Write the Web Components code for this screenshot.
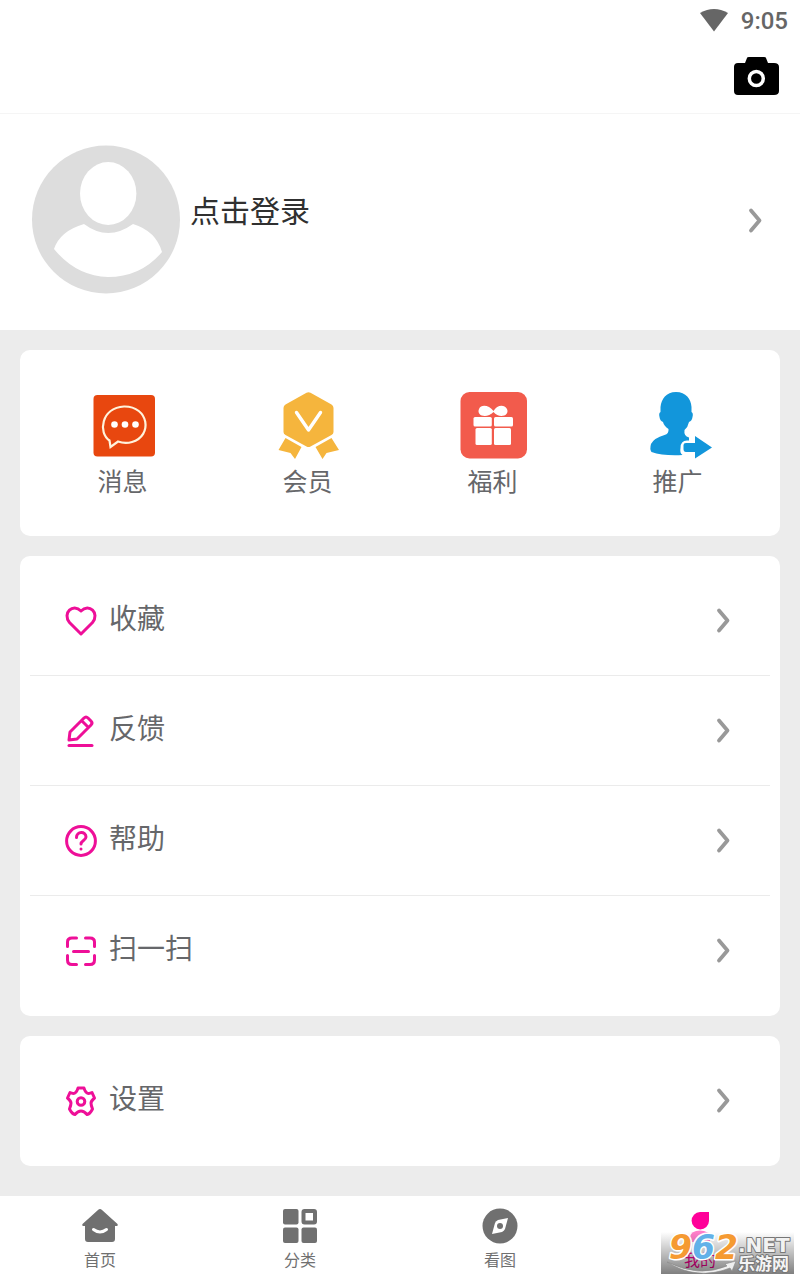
<!DOCTYPE html>
<html lang="zh-CN">
<head>
  <meta charset="UTF-8">
  <meta name="viewport" content="width=device-width, initial-scale=1">
  <title>我的</title>
  <style>
    html, body {
      margin: 0;
      min-height: 100%;
    }

    body {
      font-family: Roboto, "Noto Sans CJK SC", sans-serif;
      font-weight: 400;
      color: #66676a;
      background: #ececec;
    }
  </style>
</head>
<body>
  <mine-page>
    <status-bar slot="top" time="9:05"></status-bar>
    <title-bar slot="top"></title-bar>
    <profile-row slot="top">点击登录</profile-row>

    <card-box>
      <shortcut-grid>
        <shortcut-item icon="message">消息</shortcut-item>
        <shortcut-item icon="vip">会员</shortcut-item>
        <shortcut-item icon="gift">福利</shortcut-item>
        <shortcut-item icon="promote">推广</shortcut-item>
      </shortcut-grid>
    </card-box>

    <card-box>
      <menu-row icon="heart">收藏</menu-row>
      <menu-row icon="pencil">反馈</menu-row>
      <menu-row icon="help">帮助</menu-row>
      <menu-row icon="scan" last>扫一扫</menu-row>
    </card-box>

    <card-box>
      <menu-row icon="gear" last>设置</menu-row>
    </card-box>

    <tab-bar slot="bottom">
      <tab-item icon="home">首页</tab-item>
      <tab-item icon="category">分类</tab-item>
      <tab-item icon="compass">看图</tab-item>
      <tab-item icon="mine" active>我的</tab-item>
      <site-badge slot="badge"></site-badge>
    </tab-bar>
  </mine-page>

  <script>
    // each icon: [width, height, svg content]
    const ICONS = {
      wifi: [30, 24, '<path fill="#666" d="M1 4Q15-4 29 4L15 22.500Z"/>'],
      camera: [46, 40, '<path d="M5 7H12L14 2Q14 1 16 1H31Q33 1 33 2L35 7H41Q46 7 46 11V35Q46 39 41 39H5Q1 39 1 35V11Q1 7 5 7Z"/><circle cx="23.300" cy="22.500" r="7" fill="none" stroke="#fff" stroke-width="3.500"/>'],
      avatar: [148, 148, '<circle cx="74" cy="74.500" r="74" fill="#ddd"/><ellipse cx="76.200" cy="48.500" rx="28.200" ry="31.500" fill="#fff"/><path fill="#fff" d="M52 79Q76 97 101 79Q124 86 130 107Q109 132 76 132Q44 131 22 104Q28 86 52 79Z"/>'],
      chevron: [16, 28, '<path d="M4 3.500L12.500 13.500L4 23.500" fill="none" stroke="#999" stroke-width="3.800" stroke-linecap="round" stroke-linejoin="round"/>'],
      message: [68, 68, '<rect x="4.500" y="3" width="61.500" height="61.500" rx="4" fill="#e8470f"/><path d="M20.500 48.500C9 41 12 16 35 14.500C60 14 64 44 43 50Q36 52 29 49.500L21.500 55Z" fill="none" stroke="#fff3dc" stroke-width="2.200"/><g fill="#fff"><circle cx="25.500" cy="32.500" r="3.300"/><circle cx="36" cy="32.500" r="3.300"/><circle cx="46.500" cy="32.500" r="3.300"/></g>'],
      vip: [68, 68, '<g fill="#f5b53d"><path d="M32.500 .8Q34.500 -.4 36.500 .8L57.500 12.500Q59.500 13.500 59.500 16V40Q59.500 42 57.500 43L36.500 54.500Q34.500 55.500 32.500 54.500L11.500 43Q9.500 42 9.500 40V16Q9.500 13.500 11.500 12.500Z"/><path d="M11.500 46L27.500 55L21 67L16.500 61L4.500 58Z"/><path d="M57.500 46L41.500 55L48.500 67L52.500 61L65 58Z"/></g><path d="M22.500 20.500L34.500 38L46.500 20.500" fill="none" stroke="#fff" stroke-width="3.400" stroke-linecap="round" stroke-linejoin="round"/>'],
      gift: [68, 68, '<rect x="1.500" width="66.500" height="66.500" rx="9" fill="#f25b4c"/><g fill="#fff"><path d="M34.500 19C30 13 22 12 20 17C17 24 28 27 34.500 20C40 27 51 24 48 17C45 12 38 13 34.500 19Z"/><rect x="14.500" y="25" width="18.300" height="9.500" rx="1.500"/><rect x="35" y="25" width="19" height="9.500" rx="1.500"/><rect x="16.500" y="36" width="16.300" height="17" rx="1.500"/><rect x="35" y="36" width="17" height="17" rx="1.500"/></g>'],
      promote: [68, 68, '<g fill="#1296db"><path d="M32 0C42 0 47 7 47.500 15V20Q49.500 21 48.500 25Q48 29 45 30Q44 35 40.500 38Q39.500 44 45 45.500V48.500H43Q36.500 48.500 36.500 56Q35.500 61 38.500 63Q19 64 7.500 60Q5.500 57 7 52Q10 46 20.500 43Q25 42 24.500 37Q20 34 19 30Q16 29 15.500 25Q14.500 21 16.500 20V15C17.500 7 22 0 32 0Z"/><path d="M51 44L68 55.500L51 66.500V60H42Q39.500 60 39.500 57V53Q39.500 51 42 51H51Z"/></g>'],
      heart: [34, 34, '<path d="M17 30L5.500 18.500C-2 9 9-1 17 7C25-1 36 9 28.500 18.500Z"/>'],
      pencil: [34, 34, '<path d="M5 26L6 18L20 4Q22 2 24 4L27 7Q29 9 27 11L13 25ZM18 7L24 13"/><path d="M5 31.500H28"/>'],
      help: [34, 34, '<circle cx="17" cy="17" r="14.400"/><path d="M12.500 13.500C12.500 7 22 7 22 13C22 16.500 17 16.500 17 20"/><path d="M17 25V25.100"/>'],
      scan: [34, 34, '<path d="M12.500 4H8Q3.500 4 3.500 8V12.500M21.500 4H26Q30.500 4 30.500 8V12.500M3.500 21.500V26Q3.500 30.500 8 30.500H12.500M30.500 21.500V26Q30.500 30.500 26 30.500H21.500M9.500 17.500H24.500"/>'],
      gear: [34, 34, '<path d="M14 4H20Q21 8 23 9Q25 10 28 8.500L30.500 14Q27 17 27 19Q27 21 28.500 25Q26 30 23 30.500Q20 27 17 27Q14 27 11 30.500Q8 30 5.500 25Q7 21 7 19Q7 17 3.500 14L6 8.500Q9 10 11 9Q13 8 14 4Z"/><circle cx="17" cy="17.500" r="3.800"/>'],
      home: [36, 36, '<path fill="#707070" d="M16 2Q18 .2 20 2L35.500 16Q36.500 18 34 18H33V31Q33 34 30 34H6Q3 34 3 31V18H2Q-.5 18 .5 16Z"/><path d="M11.500 21.500Q18 26.500 24.500 21.500" fill="none" stroke="#fff" stroke-width="3" stroke-linecap="round"/>'],
      category: [36, 36, '<g fill="#707070"><rect x="1" y="1" width="15.500" height="15.500" rx="2"/><rect x="1" y="19.500" width="15.500" height="15.500" rx="2"/><rect x="19.500" y="19.500" width="15.500" height="15.500" rx="2"/></g><rect x="21.500" y="3" width="11.500" height="11.500" rx="1" fill="none" stroke="#707070" stroke-width="4"/>'],
      compass: [36, 36, '<circle cx="18" cy="18" r="17.500" fill="#707070"/><path d="M10 26L13 15Q14 13 16 12L26 10L23 21Q22 23 20 24Z" fill="#fff"/><circle cx="18" cy="18" r="3" fill="#707070"/>'],
      mine: [36, 36, '<path fill="#ff0099" d="M18 4H27V13A8.700 8.700 0 1 1 18 4Z"/><path fill="#ff7fca" d="M8 29Q9 22.500 18 22.500Q27 22.500 28 29V34H8Z"/>']
    };

    class AppIcon extends HTMLElement {
      constructor() {
        super();
        this.attachShadow({ mode: 'open' });
      }

      connectedCallback() {
        const [w, h, content] = ICONS[this.getAttribute('name')];
        this.shadowRoot.innerHTML = `
          <style>
            :host { display: block; flex: none; }
            svg { display: block; overflow: visible; }
            .line {
              fill: none;
              stroke: #ee0f98;
              stroke-width: 3;
              stroke-linecap: round;
              stroke-linejoin: round;
            }
          </style>
          <svg class="${this.hasAttribute('line') ? 'line' : ''}" width="${w}" height="${h}" viewBox="0 0 ${w} ${h}" aria-hidden="true">${content}</svg>
        `;
      }
    }

    class MinePage extends HTMLElement {
      constructor() {
        super();
        this.attachShadow({ mode: 'open' });
        this.shadowRoot.innerHTML = `
          <style>
            :host {
              display: flex;
              flex-direction: column;
              min-height: 100vh;
            }
            header { background: #fff; }
            main {
              flex: 1;
              display: flex;
              flex-direction: column;
              gap: 20px;
              padding: 20px;
            }
          </style>
          <header><slot name="top"></slot></header>
          <main><slot></slot></main>
          <slot name="bottom"></slot>
        `;
      }
    }

    class StatusBar extends HTMLElement {
      constructor() {
        super();
        this.attachShadow({ mode: 'open' });
      }

      connectedCallback() {
        this.shadowRoot.innerHTML = `
          <style>
            :host {
              display: flex;
              justify-content: flex-end;
              align-items: center;
              gap: 12px;
              height: 42px;
              padding-right: 12px;
              color: #666;
              font-size: 24px;
              font-weight: 500;
            }
          </style>
          <app-icon name="wifi"></app-icon>
          <time>${this.getAttribute('time')}</time>
        `;
      }
    }

    class TitleBar extends HTMLElement {
      constructor() {
        super();
        this.attachShadow({ mode: 'open' });
        this.shadowRoot.innerHTML = `
          <style>
            :host {
              display: flex;
              justify-content: flex-end;
              align-items: flex-start;
              height: 57px;
              padding: 14px 21px 0 0;
              border-bottom: 1px solid #f5f5f5;
            }
            button {
              padding: 0;
              border: 0;
              background: none;
            }
          </style>
          <button type="button" aria-label="拍照"><app-icon name="camera"></app-icon></button>
        `;
      }
    }

    class ProfileRow extends HTMLElement {
      constructor() {
        super();
        this.attachShadow({ mode: 'open' });
        this.shadowRoot.innerHTML = `
          <style>
            :host { display: block; }
            a {
              display: flex;
              align-items: center;
              gap: 10px;
              padding: 31px 37px 37px 32px;
              color: #303030;
              font-size: 30px;
              line-height: 40px;
              text-decoration: none;
            }
            span { flex: 1; padding-bottom: 14px; }
            .arrow { padding-top: 4px; }
          </style>
          <a href="#login">
            <app-icon name="avatar"></app-icon>
            <span><slot></slot></span>
            <app-icon class="arrow" name="chevron"></app-icon>
          </a>
        `;
      }
    }

    class CardBox extends HTMLElement {
      constructor() {
        super();
        this.attachShadow({ mode: 'open' });
        this.shadowRoot.innerHTML = `
          <style>
            :host {
              display: block;
              padding: 10px;
              background: #fff;
              border-radius: 10px;
            }
          </style>
          <slot></slot>
        `;
      }
    }

    class ShortcutGrid extends HTMLElement {
      constructor() {
        super();
        this.attachShadow({ mode: 'open' });
        this.shadowRoot.innerHTML = `
          <style>
            :host {
              display: grid;
              grid-template-columns: repeat(4, 1fr);
            }
          </style>
          <slot></slot>
        `;
      }
    }

    class ShortcutItem extends HTMLElement {
      constructor() {
        super();
        this.attachShadow({ mode: 'open' });
      }

      connectedCallback() {
        this.shadowRoot.innerHTML = `
          <style>
            :host { display: block; }
            a {
              display: flex;
              flex-direction: column;
              align-items: center;
              gap: 5px;
              padding: 32px 0 25px;
              color: inherit;
              font-size: 25px;
              line-height: 36px;
              text-decoration: none;
            }
          </style>
          <a href="#${this.getAttribute('icon')}">
            <app-icon name="${this.getAttribute('icon')}"></app-icon>
            <span><slot></slot></span>
          </a>
        `;
      }
    }

    class MenuRow extends HTMLElement {
      constructor() {
        super();
        this.attachShadow({ mode: 'open' });
      }

      connectedCallback() {
        this.shadowRoot.innerHTML = `
          <style>
            :host {
              display: block;
              border-bottom: 1px solid #ebebeb;
            }
            :host([last]) { border-color: transparent; }
            a {
              display: flex;
              align-items: center;
              gap: 11px;
              height: 109px;
              padding: 0 39px 0 34px;
              color: inherit;
              font-size: 28px;
              line-height: 40px;
              text-decoration: none;
            }
            span { flex: 1; padding-bottom: 2px; }
          </style>
          <a href="#${this.getAttribute('icon')}">
            <app-icon name="${this.getAttribute('icon')}" line></app-icon>
            <span><slot></slot></span>
            <app-icon name="chevron"></app-icon>
          </a>
        `;
      }
    }

    class TabBar extends HTMLElement {
      constructor() {
        super();
        this.attachShadow({ mode: 'open' });
        this.shadowRoot.innerHTML = `
          <style>
            :host {
              display: block;
              position: relative;
              background: #fff;
            }
            nav {
              display: grid;
              grid-template-columns: repeat(4, 1fr);
            }
          </style>
          <nav><slot></slot></nav>
          <slot name="badge"></slot>
        `;
      }
    }

    class TabItem extends HTMLElement {
      constructor() {
        super();
        this.attachShadow({ mode: 'open' });
      }

      connectedCallback() {
        this.shadowRoot.innerHTML = `
          <style>
            :host { display: block; color: #707070; }
            :host([active]) { color: #ff0099; }
            a {
              display: flex;
              flex-direction: column;
              align-items: center;
              gap: 5px;
              padding: 12px 0 7px;
              color: inherit;
              font-size: 16px;
              line-height: 24px;
              text-decoration: none;
            }
          </style>
          <a href="#${this.getAttribute('icon')}">
            <app-icon name="${this.getAttribute('icon')}"></app-icon>
            <span><slot></slot></span>
          </a>
        `;
      }
    }

    // translucent site badge lying over the last tab
    class SiteBadge extends HTMLElement {
      constructor() {
        super();
        this.attachShadow({ mode: 'open' });
        this.shadowRoot.innerHTML = `
          <style>
            :host {
              position: absolute;
              right: 6px;
              bottom: 6px;
              pointer-events: none;
            }
            svg { display: block; overflow: visible; }
            text {
              paint-order: stroke;
              stroke-linejoin: round;
            }
            .num {
              font: italic 700 33px "DejaVu Sans", sans-serif;
              stroke: #fff;
              stroke-width: 3px;
            }
            .net {
              font: 700 20px "DejaVu Sans", sans-serif;
              fill: #f2f2f2;
              stroke: #777;
              stroke-width: 2px;
            }
            .cn {
              font: 700 17px "Noto Sans CJK SC", sans-serif;
              fill: #f4f4f4;
              stroke: #777;
              stroke-width: 2px;
            }
          </style>
          <svg width="133" height="42" viewBox="0 0 133 42">
            <defs>
              <linearGradient id="shade" x1="0" y1="0" x2="0" y2="1">
                <stop offset="0" stop-color="#000" stop-opacity="0"/>
                <stop offset="1" stop-color="#000" stop-opacity=".5"/>
              </linearGradient>
            </defs>
            <rect width="133" height="42" fill="url(#shade)"/>
            <path d="M6 30Q38 46 66 34L64 32L75 29L71 39L69 36Q36 49 6 30Z" fill="#eee" stroke="#888" stroke-width=".6"/>
            <text class="num" x="8" y="27"><tspan fill="#f59a32">9</tspan><tspan fill="#62b1e8">6</tspan><tspan fill="#f59a32">2</tspan></text>
            <text class="net" x="77" y="20">.NET</text>
            <text class="cn" x="77" y="38">乐游网</text>
          </svg>
        `;
      }
    }

    customElements.define('app-icon', AppIcon);
    customElements.define('mine-page', MinePage);
    customElements.define('status-bar', StatusBar);
    customElements.define('title-bar', TitleBar);
    customElements.define('profile-row', ProfileRow);
    customElements.define('card-box', CardBox);
    customElements.define('shortcut-grid', ShortcutGrid);
    customElements.define('shortcut-item', ShortcutItem);
    customElements.define('menu-row', MenuRow);
    customElements.define('tab-bar', TabBar);
    customElements.define('tab-item', TabItem);
    customElements.define('site-badge', SiteBadge);
  </script>
</body>
</html>
